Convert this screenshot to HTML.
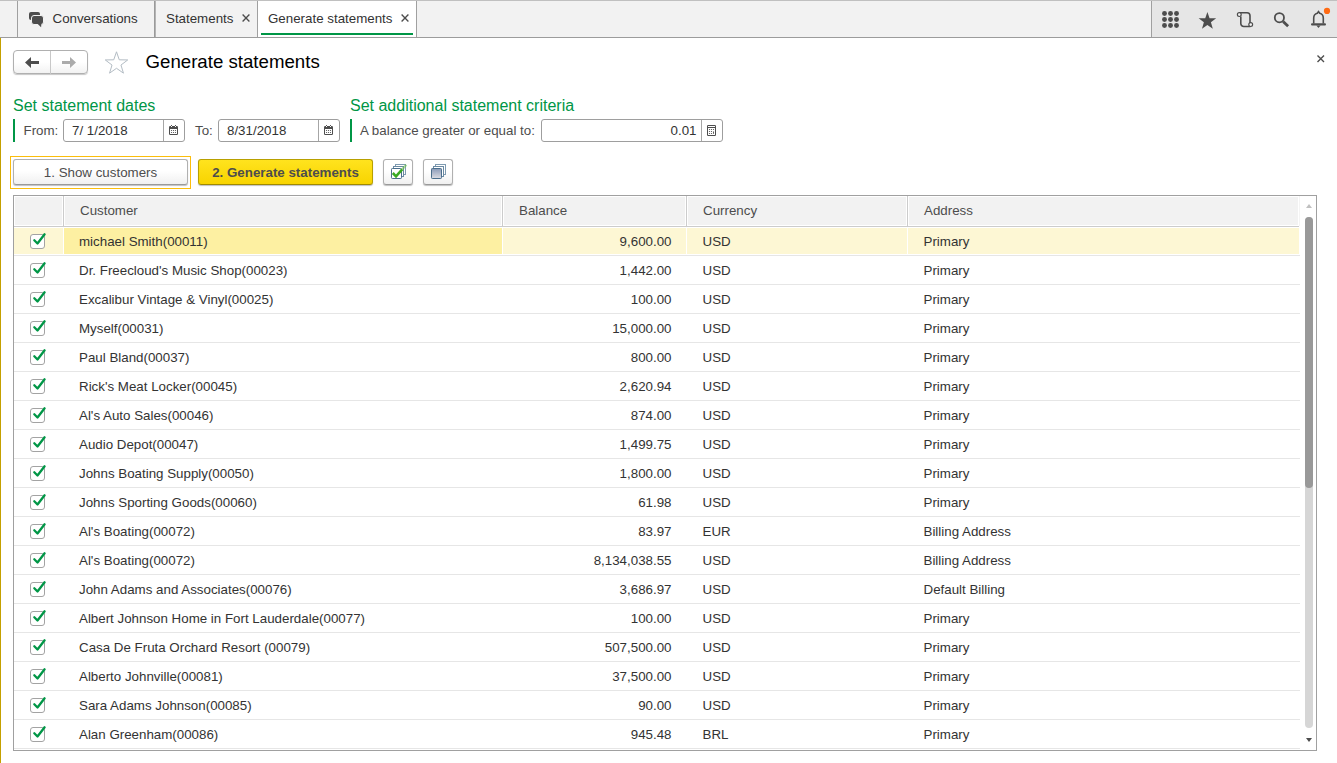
<!DOCTYPE html>
<html lang="en">
<head>
<meta charset="utf-8">
<title>Generate statements</title>
<style>
*{box-sizing:border-box;margin:0;padding:0}
html,body{width:1337px;height:763px;overflow:hidden;background:#fff}
body{font-family:"Liberation Sans",Arial,sans-serif;font-size:13.333px;color:#333;position:relative}
.abs{position:absolute}
svg{position:absolute;overflow:visible}
#tabbar{position:absolute;left:0;top:0;width:1337px;height:38px;background:#f2f2f2;border-top:1px solid #c0c0c0;border-bottom:1px solid #9c9c9c}
#tabbar .vl{position:absolute;top:0;width:1px;height:36px;background:#a0a0a0}
.tab{position:absolute;top:1px;height:36px;line-height:35px;white-space:nowrap;color:#333}
.tab.active{background:#fff}
#tools{position:absolute;left:1152px;top:1px;width:185px;height:36px;background:#e6e6e6}
#goldbar{position:absolute;left:0;top:38px;width:1px;height:725px;background:#c4a000}
.navgrp{position:absolute;left:13px;top:50px;width:75px;height:24px;border:1px solid #b0b0b0;border-radius:4px;background:linear-gradient(#fff 0%,#fff 50%,#f2f2f2 100%);box-shadow:0 1px 1px rgba(0,0,0,.22)}
.title{position:absolute;left:145.5px;top:51.300px;font-size:18.667px;line-height:22px;color:#000;white-space:nowrap}
.grp{position:absolute;font-size:16px;line-height:18px;color:#009646;white-space:nowrap}
.gbar{position:absolute;width:2px;height:23px;background:#009646}
.lbl{position:absolute;line-height:16px;white-space:nowrap;color:#4d4d4d}
.inp{position:absolute;height:23px;border:1px solid #9e9e9e;border-radius:3px;background:#fff;line-height:21px;white-space:nowrap;color:#333}
.inp .sep{position:absolute;top:0;right:20px;width:1px;height:21px;background:#a6a6a6}
.btn{position:absolute;top:159px;height:26px;border:1px solid #b0b0b0;border-bottom-color:#999;border-radius:3px;background:linear-gradient(#fff 0%,#fff 45%,#f0f0f0 100%);box-shadow:0 1px 1px rgba(0,0,0,.25);text-align:center;white-space:nowrap;color:#4d4d4d;line-height:23px;padding-top:1px}
#tbl{position:absolute;left:13px;top:195px;width:1304px;height:556px;border:1px solid #a0a0a0;background:#fff;overflow:hidden}
.hbg{position:absolute;top:1px;height:28px;background:#f2f2f2}
#hdrline{position:absolute;left:0;top:30px;width:1285px;height:1px;background:#ccc}
.hc{position:absolute;top:1px;height:28px;line-height:28px;color:#4d4d4d;white-space:nowrap}
.hsep{position:absolute;top:0;width:1px;height:30px;background:#ccc}
.row{position:absolute;left:0;width:1286px;height:29px;border-bottom:1px solid #e6e6e6;line-height:29px;color:#333;white-space:nowrap}
.row>div{position:absolute;top:1px;height:26px;line-height:27px}
.c0{left:0;width:49px}
.c1{left:50px;width:438px;padding-left:15px}
.c2{left:489px;width:183px;text-align:right;padding-right:14.5px}
.c3{left:673px;width:220px;padding-left:15.5px}
.c4{left:894px;width:391px;padding-left:15.5px}
.row.sel>div{background:#fdf7d4}
.row.sel>.c1{background:#fdf0a2}
.cb{position:absolute;left:16px;top:6px;width:15px;height:15px;border:1px solid #a3a3a3;border-radius:3px;background:#fff}
.cb svg{left:-1px;top:-1px}
</style>
</head>
<body>
<div id="tabbar">
  <div class="vl" style="left:17px"></div>
  <div class="vl" style="left:154px;background:#9a9a9a"></div>
  <div class="vl" style="left:155px;background:#b4b4b4"></div>
  <div class="vl" style="left:257px"></div>
  <div class="vl" style="left:416px"></div>
  <div class="vl" style="left:1151px"></div>
</div>
<div class="tab" style="left:18px;width:136px"><span class="abs" style="left:34.5px">Conversations</span>
<svg style="left:10px;top:10px" width="17" height="17" viewBox="28 11 17 17"><rect x="29" y="12" width="11" height="8" rx="2" fill="#4d4d4d"/><rect x="31.500" y="15.500" width="12" height="9" rx="2.500" fill="#4d4d4d" stroke="#f2f2f2" stroke-width="1"/><path d="M37.200 23.500H41.400L41.100 27.300z" fill="#4d4d4d"/></svg></div>
<div class="tab" style="left:156px;width:101px"><span class="abs" style="left:10px">Statements</span>
<svg style="left:85.500px;top:12.800px" width="8" height="8" viewBox="0 0 8 8"><path d="M0.600 0.600L7.400 7.400M7.400 0.600L0.600 7.400" stroke="#4d4d4d" stroke-width="1.350" fill="none"/></svg></div>
<div class="tab active" style="left:258px;width:158px"><span class="abs" style="left:10px">Generate statements</span>
<svg style="left:142.500px;top:12.800px" width="8" height="8" viewBox="0 0 8 8"><path d="M0.600 0.600L7.400 7.400M7.400 0.600L0.600 7.400" stroke="#4d4d4d" stroke-width="1.350" fill="none"/></svg>
<div class="abs" style="left:3px;top:32px;width:152px;height:2px;background:#009646"></div></div>
<div id="tools">
<svg style="left:0;top:0" width="185" height="36" viewBox="1152 1 185 36"><circle cx="1164.5" cy="13.5" r="2.450" fill="#4d4d4d"/><circle cx="1170.5" cy="13.5" r="2.450" fill="#4d4d4d"/><circle cx="1176.5" cy="13.5" r="2.450" fill="#4d4d4d"/><circle cx="1164.5" cy="19.5" r="2.450" fill="#4d4d4d"/><circle cx="1170.5" cy="19.5" r="2.450" fill="#4d4d4d"/><circle cx="1176.5" cy="19.5" r="2.450" fill="#4d4d4d"/><circle cx="1164.5" cy="25.5" r="2.450" fill="#4d4d4d"/><circle cx="1170.5" cy="25.5" r="2.450" fill="#4d4d4d"/><circle cx="1176.5" cy="25.5" r="2.450" fill="#4d4d4d"/><path d="M1207.4 12L1209.57 18.21L1216.15 18.36L1210.92 22.34L1212.81 28.64L1207.4 24.9L1201.99 28.64L1203.88 22.34L1198.65 18.36L1205.23 18.21z" fill="#4d4d4d"/><path d="M1239.200 12.800H1247a3 3 0 0 1 3 3V23.500 M1240.800 16.500V23.500a3 3 0 0 0 3 3H1250.500" fill="none" stroke="#4d4d4d" stroke-width="1.600"/><circle cx="1239.300" cy="14.600" r="1.900" fill="#f2f2f2" stroke="#4d4d4d" stroke-width="1.200"/><circle cx="1250.700" cy="24.600" r="1.900" fill="#f2f2f2" stroke="#4d4d4d" stroke-width="1.200"/><circle cx="1279.400" cy="17.700" r="4.600" fill="none" stroke="#4d4d4d" stroke-width="1.800"/><path d="M1283.100 21.400L1288.100 26.300" stroke="#4d4d4d" stroke-width="2.800" fill="none"/><path d="M1313.700 23.400V17.900A4.800 4.900 0 0 1 1317.300 13.200L1318.500 11.600L1319.700 13.200A4.800 4.900 0 0 1 1323.300 17.900V23.400" fill="none" stroke="#4d4d4d" stroke-width="1.600" stroke-linejoin="miter"/><path d="M1312.100 24.400H1324.900" fill="none" stroke="#4d4d4d" stroke-width="2.200" stroke-linecap="round"/><path d="M1316.400 25.600h4.200l-2.100 2.300z" fill="#4d4d4d"/><circle cx="1327" cy="10.900" r="3.100" fill="#ff6a13"/></svg>
</div>
<div id="goldbar"></div>

<div class="navgrp"><div class="abs" style="left:36px;top:0;width:1px;height:23px;background:#c8c8c8"></div>
<svg style="left:0;top:0" width="73" height="22" viewBox="14 51 73 22"><path d="M25 62.500L31 57v4h8v3h-8v4z" fill="#4d4d4d"/><path d="M76 62.500L70 57v4h-8v3h8v4z" fill="#ababab"/></svg></div>
<svg style="left:104px;top:50px" width="26" height="26" viewBox="104 50 26 26"><path d="M116.5 51.8L119.26 59.8L127.72 59.95L120.97 65.05L123.44 73.15L116.5 68.3L109.56 73.15L112.03 65.05L105.28 59.95L113.74 59.8z" fill="#fff" stroke="#b3bcc4" stroke-width="1"/></svg>
<div class="title">Generate statements</div>
<svg style="left:1317px;top:55px" width="8" height="8" viewBox="0 0 8 8"><path d="M0.500 0.500L7 7M7 0.500L0.500 7" stroke="#4d4d4d" stroke-width="1.400" fill="none"/></svg>

<div class="grp" style="left:13px;top:96.500px">Set statement dates</div>
<div class="grp" style="left:350px;top:96.500px">Set additional statement criteria</div>
<div class="gbar" style="left:13px;top:119px"></div>
<div class="gbar" style="left:350px;top:119px"></div>
<div class="lbl" style="left:23.500px;top:122.500px">From:</div>
<div class="inp" style="left:63px;top:119px;width:122px"><span class="abs" style="left:8px;top:0px">7/ 1/2018</span><div class="sep"></div><svg style="left:105px;top:5px" width="9" height="10" viewBox="0 0 9 10"><rect x="0" y="1" width="9" height="9" rx="1.200" fill="#4d4d4d"/><rect x="1" y="4" width="7" height="5" fill="#fff"/><rect x="2" y="0" width="1" height="1" fill="#555"/><rect x="6" y="0" width="1" height="1" fill="#555"/><rect x="2" y="1" width="1" height="1" fill="#fff"/><rect x="6" y="1" width="1" height="1" fill="#fff"/><circle cx="2.5" cy="5.5" r="0.620" fill="#4d4d4d"/><circle cx="4.5" cy="5.5" r="0.620" fill="#4d4d4d"/><circle cx="6.5" cy="5.5" r="0.620" fill="#4d4d4d"/><circle cx="2.5" cy="7.5" r="0.620" fill="#4d4d4d"/><circle cx="4.5" cy="7.5" r="0.620" fill="#4d4d4d"/><circle cx="6.5" cy="7.5" r="0.620" fill="#4d4d4d"/></svg></div>
<div class="lbl" style="left:195px;top:122.500px">To:</div>
<div class="inp" style="left:218px;top:119px;width:122px"><span class="abs" style="left:8px;top:0px">8/31/2018</span><div class="sep"></div><svg style="left:105px;top:5px" width="9" height="10" viewBox="0 0 9 10"><rect x="0" y="1" width="9" height="9" rx="1.200" fill="#4d4d4d"/><rect x="1" y="4" width="7" height="5" fill="#fff"/><rect x="2" y="0" width="1" height="1" fill="#555"/><rect x="6" y="0" width="1" height="1" fill="#555"/><rect x="2" y="1" width="1" height="1" fill="#fff"/><rect x="6" y="1" width="1" height="1" fill="#fff"/><circle cx="2.5" cy="5.5" r="0.620" fill="#4d4d4d"/><circle cx="4.5" cy="5.5" r="0.620" fill="#4d4d4d"/><circle cx="6.5" cy="5.5" r="0.620" fill="#4d4d4d"/><circle cx="2.5" cy="7.5" r="0.620" fill="#4d4d4d"/><circle cx="4.5" cy="7.5" r="0.620" fill="#4d4d4d"/><circle cx="6.5" cy="7.5" r="0.620" fill="#4d4d4d"/></svg></div>
<div class="lbl" style="left:360px;top:122.500px">A balance greater or equal to:</div>
<div class="inp" style="left:541px;top:119px;width:182px"><span class="abs" style="right:25.500px;top:0px">0.01</span><div class="sep"></div><svg style="left:165px;top:5px" width="9" height="11" viewBox="0 0 9 11"><rect x="0" y="0" width="9" height="11" rx="1.200" fill="#4d4d4d"/><rect x="1" y="1" width="7" height="1" fill="#fff"/><rect x="1" y="3" width="7" height="7" fill="#fff"/><circle cx="2.5" cy="4.5" r="0.620" fill="#4d4d4d"/><circle cx="4.5" cy="4.5" r="0.620" fill="#4d4d4d"/><circle cx="2.5" cy="6.5" r="0.620" fill="#4d4d4d"/><circle cx="4.5" cy="6.5" r="0.620" fill="#4d4d4d"/><circle cx="2.5" cy="8.5" r="0.620" fill="#4d4d4d"/><circle cx="4.5" cy="8.5" r="0.620" fill="#4d4d4d"/><circle cx="6.500" cy="4.500" r="0.620" fill="#4d4d4d"/><rect x="6.050" y="6" width="0.900" height="3" rx="0.450" fill="#4d4d4d"/></svg></div>

<div class="abs" style="left:10px;top:156px;width:181px;height:33px;border:1px solid #fbbd0c"></div>
<div class="btn" style="left:13px;width:175px">1. Show customers</div>
<div class="btn" style="left:198px;width:175px;font-weight:bold;background:linear-gradient(#ffe31e,#f8d400);border-color:#b8a000;border-bottom-color:#a08a00;color:#4d4d4d">2. Generate statements</div>
<div class="btn" style="left:383px;width:30px"><svg style="left:0;top:0" width="28" height="24" viewBox="384 160 28 24"><defs><linearGradient id="gq" x1="0" y1="0" x2="0" y2="1"><stop offset="0" stop-color="#8a9ab8"/><stop offset="1" stop-color="#dcdde3"/></linearGradient><linearGradient id="gk" x1="0" y1="1" x2="1" y2="0"><stop offset="0.550" stop-color="#3fae2a"/><stop offset="1" stop-color="#3fae2a" stop-opacity="0.250"/></linearGradient></defs><rect x="395.5" y="164.5" width="10" height="10" fill="#fff" stroke="#7f9bb1" stroke-width="1"/><rect x="393.5" y="166.5" width="10" height="10" fill="#fff" stroke="#6b8aa3" stroke-width="1"/><rect x="391.500" y="168.500" width="10" height="10" rx="0.800" fill="#fff" stroke="#4a6e8c" stroke-width="1"/><path d="M402 169.500L406.300 164.800" fill="none" stroke="#6cc24a" stroke-opacity="0.550" stroke-width="2.400"/><path d="M392.800 173L396 176.300L402.200 169.300" fill="none" stroke="#3aaa23" stroke-width="2.600" stroke-linejoin="miter"/></svg></div>
<div class="btn" style="left:423px;width:30px"><svg style="left:0;top:0" width="28" height="24" viewBox="384 160 28 24"><defs><linearGradient id="gq2" x1="0" y1="0" x2="0" y2="1"><stop offset="0" stop-color="#8a9ab8"/><stop offset="1" stop-color="#dcdde3"/></linearGradient><linearGradient id="gk2" x1="0" y1="1" x2="1" y2="0"><stop offset="0.550" stop-color="#3fae2a"/><stop offset="1" stop-color="#3fae2a" stop-opacity="0.250"/></linearGradient></defs><rect x="395.5" y="164.5" width="10" height="10" fill="#fff" stroke="#7f9bb1" stroke-width="1"/><rect x="393.5" y="166.5" width="10" height="10" fill="#fff" stroke="#6b8aa3" stroke-width="1"/><rect x="391.500" y="168.500" width="10" height="10" rx="0.800" fill="url(#gq2)" stroke="#4a6e8c" stroke-width="1"/></svg></div>

<div id="tbl">
  <div class="hbg" style="left:1px;width:47px"></div>
  <div class="hbg" style="left:51px;width:436px"></div>
  <div class="hbg" style="left:490px;width:181px"></div>
  <div class="hbg" style="left:674px;width:218px"></div>
  <div class="hbg" style="left:895px;width:389px"></div>
  <div class="hsep" style="left:49px"></div>
  <div class="hsep" style="left:488px"></div>
  <div class="hsep" style="left:672px"></div>
  <div class="hsep" style="left:893px"></div>
  <div class="hsep" style="left:1285px;background:#f4f4f4"></div>
  <div id="hdrline"></div>
  <div class="hc" style="left:66px">Customer</div>
  <div class="hc" style="left:505px">Balance</div>
  <div class="hc" style="left:689px">Currency</div>
  <div class="hc" style="left:910px">Address</div>
<div class="row sel" style="top:31px"><div class="c0"><span class="cb"><svg viewBox="0 0 16 16" width="16" height="16"><path d="M4.3 6.300L7.500 9.500L14.600 0.300" fill="none" stroke="#009646" stroke-width="2.300" stroke-linecap="round" stroke-linejoin="round"/></svg></span></div><div class="c1">michael Smith(00011)</div><div class="c2">9,600.00</div><div class="c3">USD</div><div class="c4">Primary</div></div>
<div class="row" style="top:60px"><div class="c0"><span class="cb"><svg viewBox="0 0 16 16" width="16" height="16"><path d="M4.3 6.300L7.500 9.500L14.600 0.300" fill="none" stroke="#009646" stroke-width="2.300" stroke-linecap="round" stroke-linejoin="round"/></svg></span></div><div class="c1">Dr. Freecloud's Music Shop(00023)</div><div class="c2">1,442.00</div><div class="c3">USD</div><div class="c4">Primary</div></div>
<div class="row" style="top:89px"><div class="c0"><span class="cb"><svg viewBox="0 0 16 16" width="16" height="16"><path d="M4.3 6.300L7.500 9.500L14.600 0.300" fill="none" stroke="#009646" stroke-width="2.300" stroke-linecap="round" stroke-linejoin="round"/></svg></span></div><div class="c1">Excalibur Vintage &amp; Vinyl(00025)</div><div class="c2">100.00</div><div class="c3">USD</div><div class="c4">Primary</div></div>
<div class="row" style="top:118px"><div class="c0"><span class="cb"><svg viewBox="0 0 16 16" width="16" height="16"><path d="M4.3 6.300L7.500 9.500L14.600 0.300" fill="none" stroke="#009646" stroke-width="2.300" stroke-linecap="round" stroke-linejoin="round"/></svg></span></div><div class="c1">Myself(00031)</div><div class="c2">15,000.00</div><div class="c3">USD</div><div class="c4">Primary</div></div>
<div class="row" style="top:147px"><div class="c0"><span class="cb"><svg viewBox="0 0 16 16" width="16" height="16"><path d="M4.3 6.300L7.500 9.500L14.600 0.300" fill="none" stroke="#009646" stroke-width="2.300" stroke-linecap="round" stroke-linejoin="round"/></svg></span></div><div class="c1">Paul Bland(00037)</div><div class="c2">800.00</div><div class="c3">USD</div><div class="c4">Primary</div></div>
<div class="row" style="top:176px"><div class="c0"><span class="cb"><svg viewBox="0 0 16 16" width="16" height="16"><path d="M4.3 6.300L7.500 9.500L14.600 0.300" fill="none" stroke="#009646" stroke-width="2.300" stroke-linecap="round" stroke-linejoin="round"/></svg></span></div><div class="c1">Rick's Meat Locker(00045)</div><div class="c2">2,620.94</div><div class="c3">USD</div><div class="c4">Primary</div></div>
<div class="row" style="top:205px"><div class="c0"><span class="cb"><svg viewBox="0 0 16 16" width="16" height="16"><path d="M4.3 6.300L7.500 9.500L14.600 0.300" fill="none" stroke="#009646" stroke-width="2.300" stroke-linecap="round" stroke-linejoin="round"/></svg></span></div><div class="c1">Al's Auto Sales(00046)</div><div class="c2">874.00</div><div class="c3">USD</div><div class="c4">Primary</div></div>
<div class="row" style="top:234px"><div class="c0"><span class="cb"><svg viewBox="0 0 16 16" width="16" height="16"><path d="M4.3 6.300L7.500 9.500L14.600 0.300" fill="none" stroke="#009646" stroke-width="2.300" stroke-linecap="round" stroke-linejoin="round"/></svg></span></div><div class="c1">Audio Depot(00047)</div><div class="c2">1,499.75</div><div class="c3">USD</div><div class="c4">Primary</div></div>
<div class="row" style="top:263px"><div class="c0"><span class="cb"><svg viewBox="0 0 16 16" width="16" height="16"><path d="M4.3 6.300L7.500 9.500L14.600 0.300" fill="none" stroke="#009646" stroke-width="2.300" stroke-linecap="round" stroke-linejoin="round"/></svg></span></div><div class="c1">Johns Boating Supply(00050)</div><div class="c2">1,800.00</div><div class="c3">USD</div><div class="c4">Primary</div></div>
<div class="row" style="top:292px"><div class="c0"><span class="cb"><svg viewBox="0 0 16 16" width="16" height="16"><path d="M4.3 6.300L7.500 9.500L14.600 0.300" fill="none" stroke="#009646" stroke-width="2.300" stroke-linecap="round" stroke-linejoin="round"/></svg></span></div><div class="c1">Johns Sporting Goods(00060)</div><div class="c2">61.98</div><div class="c3">USD</div><div class="c4">Primary</div></div>
<div class="row" style="top:321px"><div class="c0"><span class="cb"><svg viewBox="0 0 16 16" width="16" height="16"><path d="M4.3 6.300L7.500 9.500L14.600 0.300" fill="none" stroke="#009646" stroke-width="2.300" stroke-linecap="round" stroke-linejoin="round"/></svg></span></div><div class="c1">Al's Boating(00072)</div><div class="c2">83.97</div><div class="c3">EUR</div><div class="c4">Billing Address</div></div>
<div class="row" style="top:350px"><div class="c0"><span class="cb"><svg viewBox="0 0 16 16" width="16" height="16"><path d="M4.3 6.300L7.500 9.500L14.600 0.300" fill="none" stroke="#009646" stroke-width="2.300" stroke-linecap="round" stroke-linejoin="round"/></svg></span></div><div class="c1">Al's Boating(00072)</div><div class="c2">8,134,038.55</div><div class="c3">USD</div><div class="c4">Billing Address</div></div>
<div class="row" style="top:379px"><div class="c0"><span class="cb"><svg viewBox="0 0 16 16" width="16" height="16"><path d="M4.3 6.300L7.500 9.500L14.600 0.300" fill="none" stroke="#009646" stroke-width="2.300" stroke-linecap="round" stroke-linejoin="round"/></svg></span></div><div class="c1">John Adams and Associates(00076)</div><div class="c2">3,686.97</div><div class="c3">USD</div><div class="c4">Default Billing</div></div>
<div class="row" style="top:408px"><div class="c0"><span class="cb"><svg viewBox="0 0 16 16" width="16" height="16"><path d="M4.3 6.300L7.500 9.500L14.600 0.300" fill="none" stroke="#009646" stroke-width="2.300" stroke-linecap="round" stroke-linejoin="round"/></svg></span></div><div class="c1">Albert Johnson Home in Fort Lauderdale(00077)</div><div class="c2">100.00</div><div class="c3">USD</div><div class="c4">Primary</div></div>
<div class="row" style="top:437px"><div class="c0"><span class="cb"><svg viewBox="0 0 16 16" width="16" height="16"><path d="M4.3 6.300L7.500 9.500L14.600 0.300" fill="none" stroke="#009646" stroke-width="2.300" stroke-linecap="round" stroke-linejoin="round"/></svg></span></div><div class="c1">Casa De Fruta Orchard Resort (00079)</div><div class="c2">507,500.00</div><div class="c3">USD</div><div class="c4">Primary</div></div>
<div class="row" style="top:466px"><div class="c0"><span class="cb"><svg viewBox="0 0 16 16" width="16" height="16"><path d="M4.3 6.300L7.500 9.500L14.600 0.300" fill="none" stroke="#009646" stroke-width="2.300" stroke-linecap="round" stroke-linejoin="round"/></svg></span></div><div class="c1">Alberto Johnville(00081)</div><div class="c2">37,500.00</div><div class="c3">USD</div><div class="c4">Primary</div></div>
<div class="row" style="top:495px"><div class="c0"><span class="cb"><svg viewBox="0 0 16 16" width="16" height="16"><path d="M4.3 6.300L7.500 9.500L14.600 0.300" fill="none" stroke="#009646" stroke-width="2.300" stroke-linecap="round" stroke-linejoin="round"/></svg></span></div><div class="c1">Sara Adams Johnson(00085)</div><div class="c2">90.00</div><div class="c3">USD</div><div class="c4">Primary</div></div>
<div class="row" style="top:524px"><div class="c0"><span class="cb"><svg viewBox="0 0 16 16" width="16" height="16"><path d="M4.3 6.300L7.500 9.500L14.600 0.300" fill="none" stroke="#009646" stroke-width="2.300" stroke-linecap="round" stroke-linejoin="round"/></svg></span></div><div class="c1">Alan Greenham(00086)</div><div class="c2">945.48</div><div class="c3">BRL</div><div class="c4">Primary</div></div>
  <svg style="left:1292px;top:8px" width="6" height="4" viewBox="0 0 6 4"><path d="M0 4L3 0L6 4z" fill="#c0c0c0"/></svg>
  <div class="abs" style="left:1291px;top:21px;width:8px;height:511px;border-radius:4px;background:#d6d6d6"></div>
  <div class="abs" style="left:1291px;top:21px;width:8px;height:271px;border-radius:4px;background:#999"></div>
  <svg style="left:1292px;top:542px" width="6" height="4" viewBox="0 0 6 4"><path d="M0 0L3 4L6 0z" fill="#4d4d4d"/></svg>
</div>
</body>
</html>
